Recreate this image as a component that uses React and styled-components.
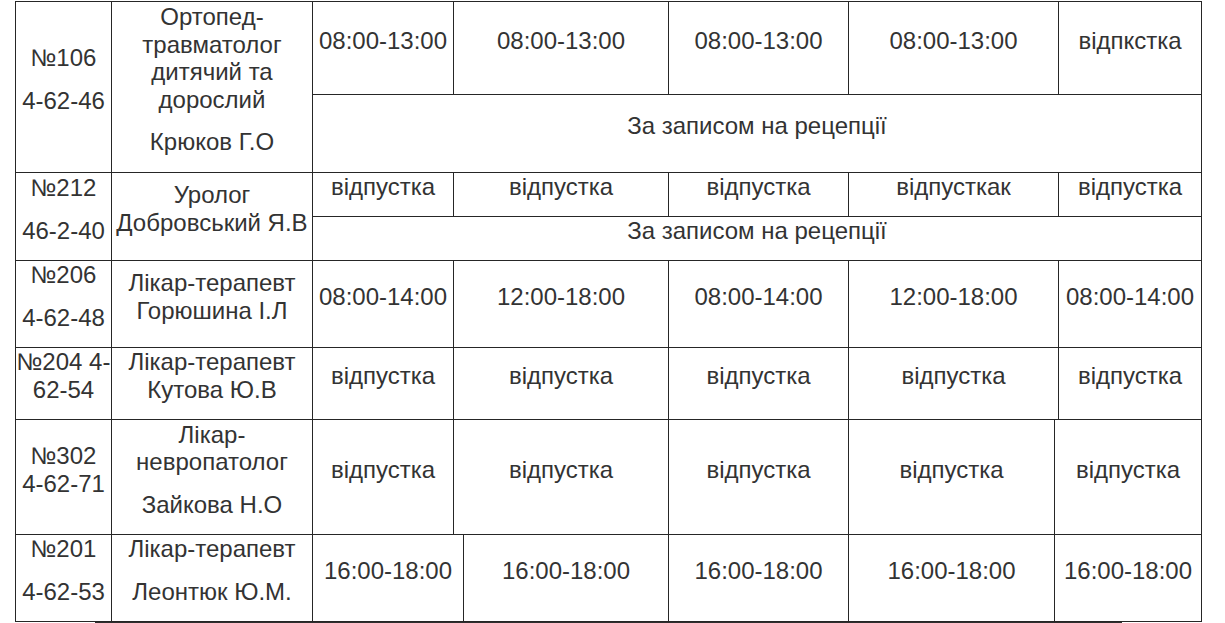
import styled, { createGlobalStyle } from 'styled-components';

const GlobalStyle = createGlobalStyle`
    html, body {
        margin: 0;
        padding: 0;
        background: #ffffff;
    }
    body {
        font-family: "Liberation Sans", Arial, sans-serif;
        color: #333333;
    }
`;

const Page = styled.div`
    padding: 1px 0 0 15px;
    width: 1225px;
    height: 623px;
    box-sizing: border-box;
    overflow: hidden;
`;

const Table = styled.div`
    width: 1187px;
    box-sizing: border-box;
    border-left: 1px solid #262626;
    border-top: 1px solid #262626;
`;

const Row = styled.div`
    display: grid;
    grid-template-columns: 96px 201px 1fr;
    height: ${(p) => p.$height}px;
`;

const Cell = styled.div`
    box-sizing: border-box;
    border-right: 1px solid #262626;
    border-bottom: 1px solid #262626;
    display: flex;
    flex-direction: column;
    justify-content: center;
    align-items: center;
    text-align: center;
    font-size: 24px;
    line-height: 27.6px;
    min-width: 0;
    overflow: visible;
`;

const Para = styled.p`
    margin: 0 0 15px 0;
    white-space: nowrap;
`;

const Schedule = styled.div`
    display: grid;
    grid-template-columns: ${(p) => p.$cols};
    grid-template-rows: ${(p) => (p.$note ? `${p.$dayHeight}px 1fr` : '1fr')};
`;

const NoteCell = styled(Cell)`
    grid-column: 1 / -1;
`;

const Separator = styled.div`
    margin: -1px 0 0 80px;
    width: 1027px;
    height: 2px;
    background: #2e2e2e;
`;

const A = '141px 215px 180px 210px 143px';
const B = '141px 215px 180px 206px 147px';
const C = '151px 205px 180px 206px 147px';

const note = 'За записом на рецепції';
const off = 'відпустка';

const rows = [
    {
        height: 171, dayHeight: 93, cols: A, note,
        room: [['№106'], ['4-62-46']],
        doctor: [['Ортопед-', 'травматолог', 'дитячий та', 'дорослий'], ['Крюков Г.О']],
        days: ['08:00-13:00', '08:00-13:00', '08:00-13:00', '08:00-13:00', 'відпкстка'],
    },
    {
        height: 88, dayHeight: 44, cols: A, note,
        room: [['№212'], ['46-2-40']],
        doctor: [['Уролог', 'Добровський Я.В']],
        days: [off, off, off, 'відпусткак', off],
    },
    {
        height: 87, cols: A,
        room: [['№206'], ['4-62-48']],
        doctor: [['Лікар-терапевт', 'Горюшина І.Л']],
        days: ['08:00-14:00', '12:00-18:00', '08:00-14:00', '12:00-18:00', '08:00-14:00'],
    },
    {
        height: 72, cols: A,
        room: [['№204 4-', '62-54']],
        doctor: [['Лікар-терапевт', 'Кутова Ю.В']],
        days: [off, off, off, off, off],
    },
    {
        height: 115, cols: B,
        room: [['№302', '4-62-71']],
        doctor: [['Лікар-', 'невропатолог'], ['Зайкова Н.О']],
        days: [off, off, off, off, off],
    },
    {
        height: 87, cols: C,
        room: [['№201'], ['4-62-53']],
        doctor: [['Лікар-терапевт'], ['Леонтюк Ю.М.']],
        days: ['16:00-18:00', '16:00-18:00', '16:00-18:00', '16:00-18:00', '16:00-18:00'],
    },
];

const Lines = ({ paras }) =>
    paras.map((lines, i) => (
        <Para key={i}>
            {lines.map((line, j) => (
                <span key={j}>
                    {j > 0 && <br />}
                    {line}
                </span>
            ))}
        </Para>
    ));

export default function App() {
    return (
        <Page>
            <GlobalStyle />
            <Table>
                {rows.map((row, i) => (
                    <Row key={i} $height={row.height}>
                        <Cell>
                            <Lines paras={row.room} />
                        </Cell>
                        <Cell>
                            <Lines paras={row.doctor} />
                        </Cell>
                        <Schedule $cols={row.cols} $note={!!row.note} $dayHeight={row.dayHeight}>
                            {row.days.map((d, j) => (
                                <Cell key={j}>
                                    <Para>{d}</Para>
                                </Cell>
                            ))}
                            {row.note && (
                                <NoteCell>
                                    <Para>{row.note}</Para>
                                </NoteCell>
                            )}
                        </Schedule>
                    </Row>
                ))}
            </Table>
            <Separator />
        </Page>
    );
}
